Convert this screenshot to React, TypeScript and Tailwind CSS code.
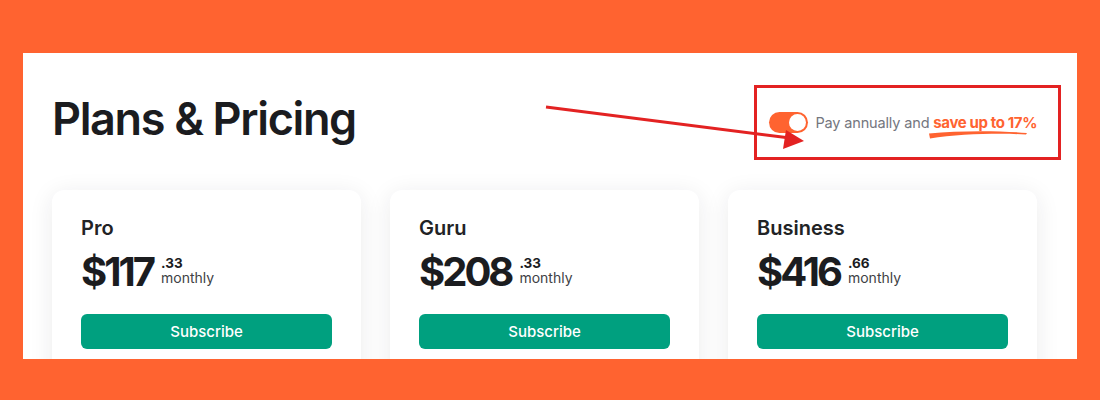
const plans = [
  { name: "Pro", dollars: "117", cents: ".33" },
  { name: "Guru", dollars: "208", cents: ".33" },
  { name: "Business", dollars: "416", cents: ".66" },
];

function Toggle() {
  return (
    <div className="flex h-[21px] w-[39px] items-center justify-end rounded-full bg-[#FF6330] px-[2px]">
      <div className="size-[17px] rounded-full bg-white" />
    </div>
  );
}

function PlanCard({ name, dollars, cents }: { name: string; dollars: string; cents: string }) {
  return (
    <div className="w-[309px] h-[200px] rounded-[12px] bg-white px-[29px] pt-[24px] shadow-[0_4px_24px_rgba(30,30,40,0.09)]">
      <h2 className="text-[20px] leading-[28px] font-semibold text-[#222325]">{name}</h2>
      <div className="mt-[10px] flex items-start">
        <span className="text-[40px] leading-[40px] font-bold tracking-[-0.075em] text-[#1b1c1f]">${dollars}</span>
        <div className="ml-[8px] mt-[5px] flex flex-col text-[#404145]">
          <span className="text-[13.5px] leading-[13px] font-bold text-[#1b1c1f]">{cents}</span>
          <span className="text-[14px] leading-[15px]">monthly</span>
        </div>
      </div>
      <button className="mt-[22px] h-[35px] w-full rounded-[6px] bg-[#00A07F] pt-[1px] text-[15px] font-medium text-white">
        Subscribe
      </button>
    </div>
  );
}

export default function App() {
  return (
    <div className="relative h-[400px] w-[1100px] bg-[#FF6330] px-[23px] pt-[53px] font-['Inter',sans-serif]">
      <div className="h-[306px] overflow-hidden bg-white px-[29px]">
        <div className="flex items-start justify-between pt-[38px] pr-[11px]">
          <h1 className="text-[45px] leading-[56px] font-semibold tracking-[-0.03em] text-[#1b1c1f]">
            Plans &amp; Pricing
          </h1>
          <div className="mt-[21px] flex items-center gap-[7px] leading-[21px]">
            <Toggle />
            <span className="text-[14.5px] tracking-[-0.01em] text-[#74767e]">
              Pay annually and{" "}
              <span className="relative text-[15px] font-bold tracking-[-0.025em] text-[#FF6330]">
                save up to 17%
                <svg className="absolute left-[-4px] top-[17px]" width="100" height="10" viewBox="0 0 100 10">
                  <path d="M0 3.5 C 30 0.5, 70 0.5, 98 3 L 97 4.5 C 70 3, 30 4, 1 8.5 Z" fill="#FF6330" />
                </svg>
              </span>
            </span>
          </div>
        </div>
        <div className="mt-[43px] flex gap-[29px]">
          {plans.map((p) => (
            <PlanCard key={p.name} {...p} />
          ))}
        </div>
      </div>

      {/* annotation */}
      <div className="pointer-events-none absolute left-[754px] top-[85px] h-[75px] w-[307px] border-[3px] border-[#E32222]" />
      <svg className="pointer-events-none absolute left-0 top-0" width="1100" height="400">
        <line x1="546" y1="107" x2="790" y2="138" stroke="#E32222" strokeWidth="3" />
        <polygon points="804,141 786,130 783,149" fill="#E32222" />
      </svg>
    </div>
  );
}
